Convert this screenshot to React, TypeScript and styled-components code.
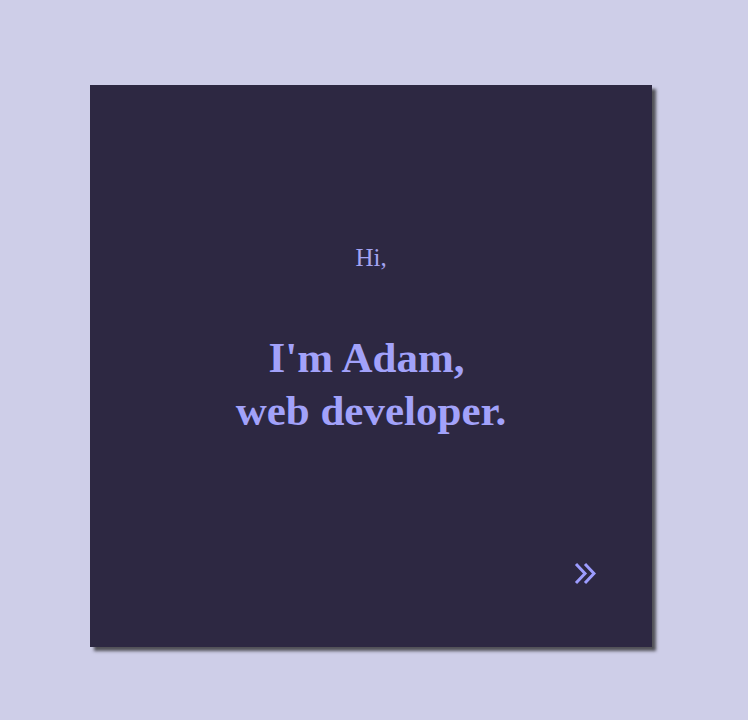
import React from "react";
import styled, { createGlobalStyle } from "styled-components";

const Global = createGlobalStyle`
  html, body { margin: 0; padding: 0; background: #cecee8; }
  body { font-family: "Liberation Serif", "DejaVu Serif", serif; }
`;

const Page = styled.div`
  height: 720px;
  padding: 85px 0 0 90px;
  box-sizing: border-box;
`;

const Card = styled.section`
  width: 562px;
  height: 562px;
  background: #2d2842;
  box-shadow: 4px 4px 3px rgba(40, 40, 40, 0.75);
  display: flex;
  flex-direction: column;
  align-items: center;
  padding: 158px 56px 62px;
  box-sizing: border-box;
  color: #9f9ff8;
`;

const Greeting = styled.p`
  margin: 0;
  font-size: 25px;
  line-height: 30px;
  color: #a3a3f2;
`;

const Headline = styled.h1`
  margin: 58px 0 0;
  font-size: 43px;
  line-height: 53px;
  font-weight: 700;
  text-align: center;
  color: #a2a2fa;
`;

const Line = styled.span<{ $shift?: number }>`
  display: inline-block;
  margin-right: ${(p) => p.$shift ?? 0}px;
`;

const NextButton = styled.button`
  margin-top: auto;
  align-self: flex-end;
  width: 22px;
  height: 23px;
  padding: 0;
  border: none;
  background: transparent;
  color: #9c9cff;
  display: flex;
`;

export default function App() {
  return (
    <Page>
      <Global />
      <Card>
        <Greeting>Hi,</Greeting>
        <Headline>
          <Line $shift={9}>I'm Adam,</Line>
          <br />
          <Line>web developer.</Line>
        </Headline>
        <NextButton aria-label="next">
          <svg width="22" height="23" viewBox="0 0 22 23" fill="none" stroke="currentColor" strokeWidth="3" strokeLinecap="butt" strokeLinejoin="miter">
            <polyline points="2,2 11,11.5 2,21" />
            <polyline points="11,2 20,11.5 11,21" />
          </svg>
        </NextButton>
      </Card>
    </Page>
  );
}
